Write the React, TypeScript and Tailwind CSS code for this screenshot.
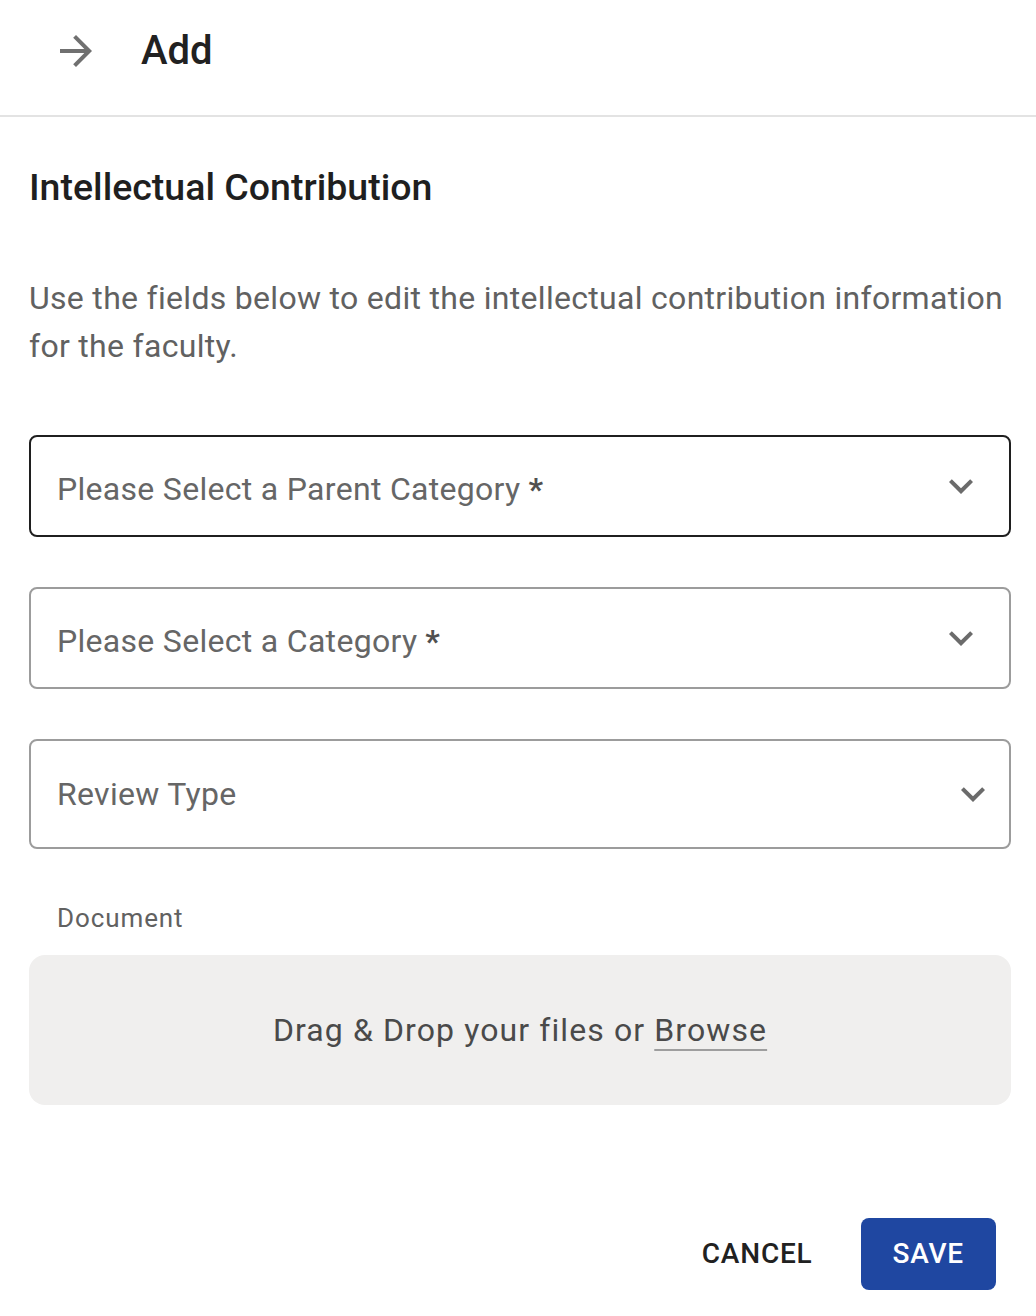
import type { ReactNode } from "react";

function ArrowForward() {
  return (
    <svg viewBox="0 0 24 24" className="h-[48px] w-[48px] fill-[#707070]">
      <path d="M12 4l-1.41 1.41L16.17 11H4v2h12.17l-5.58 5.59L12 20l8-8z" />
    </svg>
  );
}

function ExpandMore() {
  return (
    <svg viewBox="0 0 24 24" className="h-[48px] w-[48px] fill-[#6b6b6b]">
      <path d="M16.59 8.59 12 13.17 7.41 8.59 6 10l6 6 6-6z" />
    </svg>
  );
}

function SelectField({
  label,
  required,
  focused,
  tall,
}: {
  label: ReactNode;
  required?: boolean;
  focused?: boolean;
  tall?: boolean;
}) {
  return (
    <div
      className={`flex items-center justify-between rounded-[8px] border-2 bg-white pl-[26px] ${
        focused ? "border-[#1f1f1f]" : "border-[#9c9c9c]"
      } ${tall ? "h-[110px] pr-[12px]" : "h-[102px] pr-[24px]"}`}
    >
      <span
        className={`text-[32px] leading-[40px] tracking-[0.3px] text-[#666666] ${
          tall ? "" : "pt-[6px]"
        }`}
      >
        {label}
        {required ? (
          <span className="ml-[8px] font-bold text-[#505050]">*</span>
        ) : null}
      </span>
      <ExpandMore />
    </div>
  );
}

export default function App() {
  return (
    <div className="w-[1036px] bg-white font-['Roboto',sans-serif]">
      <div className="flex h-[115px] items-center pb-[14px]">
        <div className="ml-[52px] flex items-center">
          <ArrowForward />
        </div>
        <h1 className="ml-[41px] text-[40px] leading-[48px] font-medium text-[#212121]">
          Add
        </h1>
      </div>
      <div className="h-[2px] bg-[#e3e3e3]" />

      <div className="px-[29px] pr-[25px]">
        <h2 className="mt-[48px] text-[37.5px] leading-[44px] font-medium text-[#1f1f1f]">
          Intellectual Contribution
        </h2>
        <p className="mt-[65px] text-[32px] leading-[48px] tracking-[0.3px] text-[#616161]">
          Use the fields below to edit the intellectual contribution information
          for the faculty.
        </p>

        <div className="mt-[65px] flex flex-col gap-[50px]">
          <SelectField label="Please Select a Parent Category" required focused />
          <SelectField label="Please Select a Category" required />
          <SelectField label="Review Type" tall />
        </div>

        <div className="mt-[51px] pl-[28px] text-[26px] leading-[36px] tracking-[0.9px] text-[#616161]">
          Document
        </div>
        <div className="mt-[19px] flex h-[150px] items-center justify-center rounded-[16px] bg-[#f0efee]">
          <span className="text-[32px] leading-[40px] tracking-[1.1px] text-[#4a4a4a]">
            Drag &amp; Drop your files or{" "}
            <span className="underline decoration-[#9e9e9e] decoration-2 underline-offset-[8px]">
              Browse
            </span>
          </span>
        </div>

        <div className="mt-[113px] flex items-center justify-end gap-[16px] pr-[15px] pb-[26px]">
          <button className="h-[72px] pr-[32px] pl-[32px] text-[28px] font-medium tracking-[0.8px] text-[#212121]">
            CANCEL
          </button>
          <button className="h-[72px] rounded-[8px] bg-[#1f47a1] px-[32px] text-[28px] font-medium tracking-[0.8px] text-white">
            SAVE
          </button>
        </div>
      </div>
    </div>
  );
}
